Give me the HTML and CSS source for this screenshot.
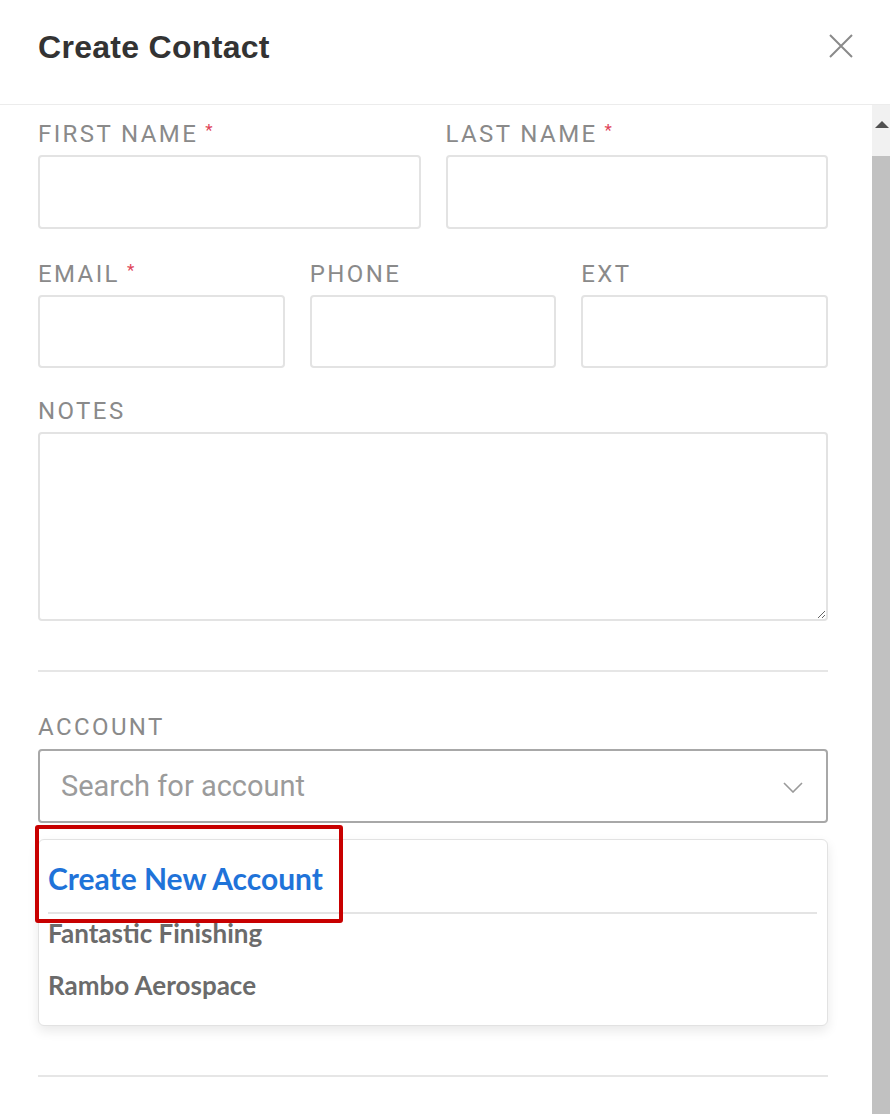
FILE: index.html
```html
<!DOCTYPE html>
<html>
<head>
<meta charset="utf-8">
<link rel="stylesheet" href="styles.css">
</head>
<body>
<div class="modal">
  <header class="header">
    <h1 class="title">Create Contact</h1>
    <svg class="close" width="24" height="24" viewBox="0 0 24 24"><path d="M1 1 L23 23 M23 1 L1 23" stroke="#8a8a8a" stroke-width="2" fill="none"/></svg>
  </header>
  <div class="main">
    <div class="content">
      <div class="row two">
        <div class="field"><label class="label">FIRST NAME<span class="req">*</span></label><input class="input" type="text"></div>
        <div class="field"><label class="label">LAST NAME<span class="req">*</span></label><input class="input" type="text"></div>
      </div>
      <div class="row three">
        <div class="field"><label class="label">EMAIL<span class="req">*</span></label><input class="input" type="text"></div>
        <div class="field"><label class="label">PHONE</label><input class="input" type="text"></div>
        <div class="field"><label class="label">EXT</label><input class="input" type="text"></div>
      </div>
      <div class="row">
        <div class="field"><label class="label">NOTES</label><textarea class="textarea"></textarea></div>
      </div>
      <div class="divider first"></div>
      <div class="field account">
        <label class="label">ACCOUNT</label>
        <div class="select">
          <span class="placeholder">Search for account</span>
          <svg class="chev" width="20" height="11" viewBox="0 0 20 11"><path d="M1 1 L10 10 L19 1" stroke="#9a9a9a" stroke-width="1.6" fill="none"/></svg>
        </div>
        <div class="dropdown">
          <div class="create">Create New Account</div>
          <div class="sep"></div>
          <div class="option">Fantastic Finishing</div>
          <div class="option">Rambo Aerospace</div>
          <div class="highlight"></div>
        </div>
      </div>
      <div class="divider last"></div>
    </div>
    <div class="scrollbar">
      <div class="track-top">
        <svg width="18" height="10" viewBox="0 0 18 10"><path d="M3 8 L10 1 L17 8 Z" fill="#505050"/></svg>
      </div>
      <div class="thumb"></div>
    </div>
  </div>
</div>
</body>
</html>
```

FILE: styles.css
```css
html, body {
  margin: 0;
  padding: 0;
  background: #ffffff;
  width: 890px;
  height: 1114px;
  overflow: hidden;
}

.modal {
  width: 890px;
  height: 1114px;
  display: flex;
  flex-direction: column;
  font-family: "Roboto", "Liberation Sans", sans-serif;
}

.header {
  height: 104px;
  flex: none;
  border-bottom: 1px solid #ececec;
  display: flex;
  justify-content: space-between;
  align-items: flex-start;
  padding: 0 37px 0 38px;
}

.title {
  margin: 29px 0 0 0;
  font-family: "Liberation Sans", Arial, sans-serif;
  font-weight: 700;
  font-size: 32px;
  line-height: 37px;
  letter-spacing: 0.3px;
  color: #333333;
}

.close {
  margin-top: 34px;
  display: block;
}

.main {
  flex: 1;
  display: flex;
  min-height: 0;
}

.content {
  flex: 1;
  padding: 15px 44px 0 38px;
  overflow: hidden;
}

.row {
  display: grid;
  column-gap: 25px;
  margin-bottom: 29px;
}

.row.two { grid-template-columns: 1fr 1fr; margin-bottom: 31px; }
.row.three { grid-template-columns: 1fr 1fr 1fr; }

.field {
  display: flex;
  flex-direction: column;
}

.label {
  font-family: "Roboto", "Liberation Sans", sans-serif;
  font-size: 24px;
  line-height: 28px;
  letter-spacing: 2.4px;
  color: #8a8a8a;
  margin-bottom: 7px;
  white-space: nowrap;
}

.req {
  color: #e0455a;
  font-size: 17px;
  vertical-align: top;
  line-height: 20px;
  margin-left: 7px;
}

.input {
  box-sizing: border-box;
  height: 74px;
  width: 100%;
  border: 2px solid #e3e3e3;
  border-radius: 4px;
  background: #fff;
  margin: 0;
  padding: 0 12px;
  font: inherit;
  outline: none;
}

.row.three .input { height: 73px; }

.textarea {
  box-sizing: border-box;
  height: 189px;
  width: 100%;
  border: 2px solid #e3e3e3;
  border-radius: 4px;
  margin: 0;
  padding: 10px;
  resize: vertical;
  font: inherit;
  outline: none;
}

.divider {
  height: 2px;
  background: #e6e6e6;
}

.divider.first { margin: 49px 0 41px 0; }
.divider.last { margin-top: 49px; }

.account .label { margin-bottom: 8px; }

.select {
  box-sizing: border-box;
  height: 74px;
  border: 2px solid #a8a8a8;
  border-radius: 4px;
  display: flex;
  align-items: center;
  justify-content: space-between;
  padding: 0 23px 0 21px;
}

.placeholder {
  font-family: "Roboto", "Liberation Sans", sans-serif;
  font-size: 29px;
  color: #9b9b9b;
}

.chev { display: block; margin-top: 2px; }

.dropdown {
  position: relative;
  margin-top: 16px;
  border: 1px solid #e2e2e2;
  border-radius: 6px;
  box-shadow: 0 5px 12px rgba(0, 0, 0, 0.09);
  padding: 20px 10px 25px 9px;
  background: #fff;
}

.create {
  font-family: "Lato", "Liberation Sans", sans-serif;
  font-weight: 700;
  font-size: 30px;
  line-height: 36px;
  color: #1f73d9;
  margin-bottom: 16px;
}

.sep {
  height: 2px;
  background: #e4e4e4;
  margin-bottom: 4px;
}

.option {
  font-family: "Lato", "Liberation Sans", sans-serif;
  font-weight: 700;
  font-size: 26px;
  line-height: 30px;
  color: #6b6b6b;
}

.option + .option { margin-top: 22px; }

.highlight {
  position: absolute;
  left: -4px;
  top: -15px;
  width: 308px;
  height: 98px;
  box-sizing: border-box;
  border: 4px solid #c80000;
  border-radius: 3px;
}

.scrollbar {
  width: 18px;
  flex: none;
  display: flex;
  flex-direction: column;
}

.track-top {
  height: 51px;
  background: #f1f1f1;
  padding-top: 15px;
  box-sizing: border-box;
}

.track-top svg { display: block; }

.thumb {
  flex: 1;
  background: #c1c1c1;
}
```
